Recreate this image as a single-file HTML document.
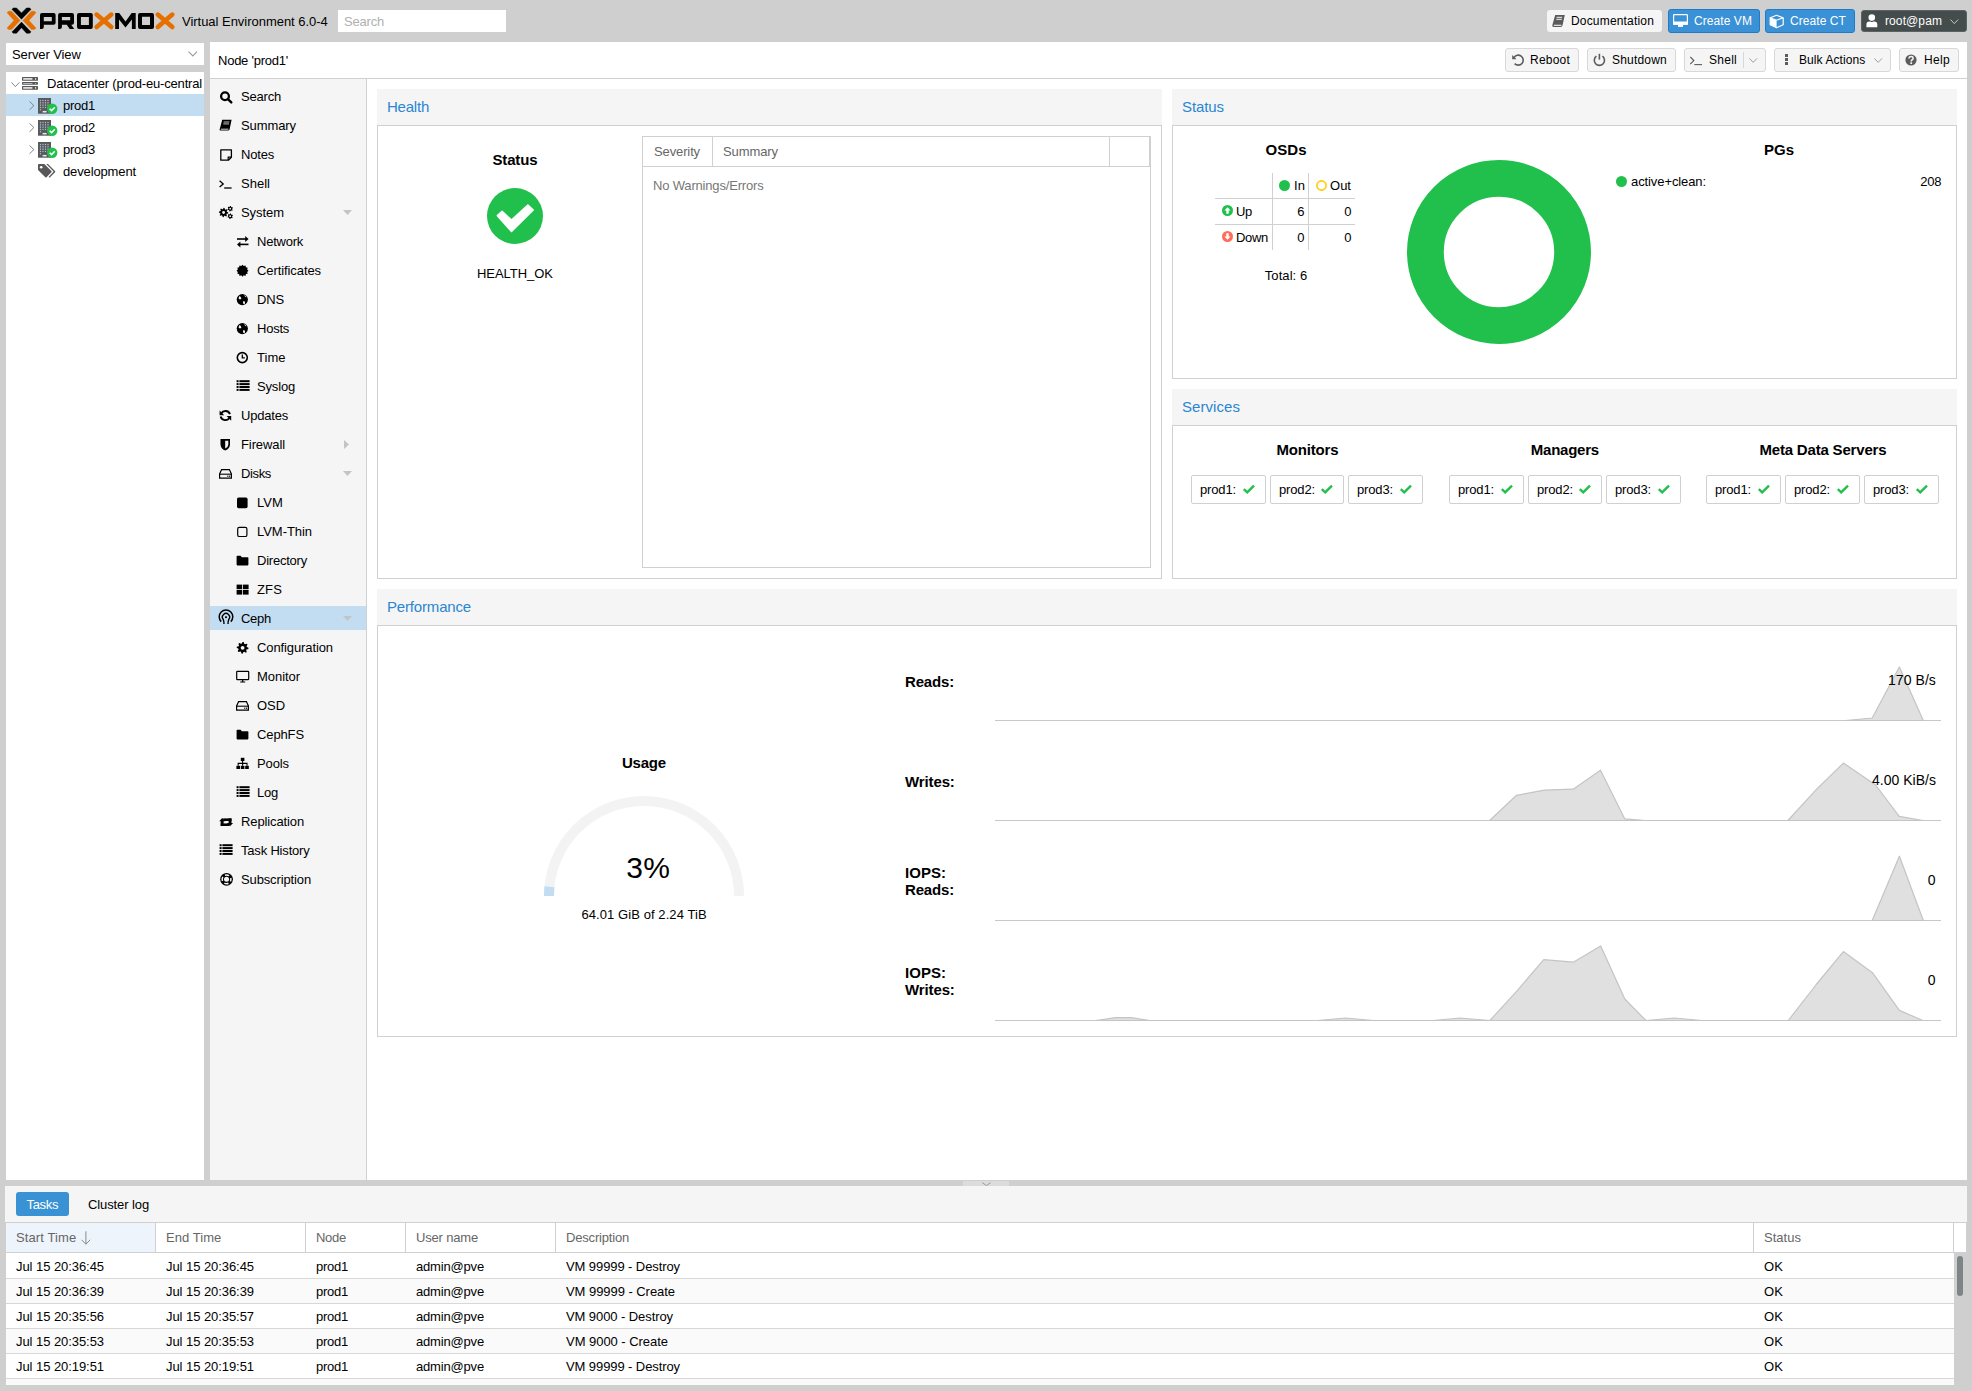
<!DOCTYPE html>
<html><head><meta charset="utf-8">
<style>
*{box-sizing:border-box}
html,body{margin:0;padding:0}
body{width:1972px;height:1391px;overflow:hidden;position:relative;background:#cfcfcf;font-family:"Liberation Sans",sans-serif;font-size:13px;color:#000}
.a{position:absolute}
.t{position:absolute;white-space:nowrap;line-height:16px}
.b{font-weight:bold}
svg{position:absolute;overflow:visible}
</style></head>
<body>
<svg style="left:0;top:0" width="180" height="42" viewBox="0 0 180 42">
<g fill="#000" stroke="#000" stroke-width="0.4" stroke-linejoin="round">
<polygon points="11.9,9.3 13.4,7.9 16.5,7.9 21.5,12.9 26.5,7.9 29.6,7.9 31.1,9.3 21.5,19.3"/>
<polygon points="21.5,22.1 31.1,32 29.6,33.3 26.5,33.3 21.5,27.7 16.5,33.3 13.4,33.3 11.9,32"/>
</g>
<g fill="#e57000" stroke="#e57000" stroke-width="0.4" stroke-linejoin="round">
<polygon points="7,12.7 8.5,11.3 11.6,11.3 20.1,20.4 11.6,29.5 8.5,29.5 7,28.1 14,20.4"/>
<polygon points="36,12.7 34.5,11.3 31.4,11.3 22.9,20.4 31.4,29.5 34.5,29.5 36,28.1 29,20.4"/>
</g>
<g fill="#000" fill-rule="evenodd">
<path d="M40,28.9 L40,14.9 Q40,12.9 42,12.9 L53.6,12.9 Q55.6,12.9 55.6,14.9 L55.6,22.8 Q55.6,24.8 53.6,24.8 L43.8,24.8 L43.8,26.9 Q43.8,28.9 41.8,28.9 Z M43.8,17.1 L51.8,17.1 L51.8,21.2 L43.8,21.2 Z"/>
<path d="M58.1,28.9 L58.1,14.9 Q58.1,12.9 60.1,12.9 L72,12.9 Q74,12.9 74,14.9 L74,22.8 Q74,24.8 72,24.8 L71.2,24.8 L74.3,28.9 L69.7,28.9 L66.8,24.8 L61.9,24.8 L61.9,26.9 Q61.9,28.9 59.9,28.9 Z M61.9,17.1 L70.2,17.1 L70.2,20.2 L61.9,20.2 Z"/>
<path d="M79,12.9 L90.8,12.9 Q92.8,12.9 92.8,14.9 L92.8,26.9 Q92.8,28.9 90.8,28.9 L79,28.9 Q77,28.9 77,26.9 L77,14.9 Q77,12.9 79,12.9 Z M80.9,17 L88.9,17 L88.9,24.9 L80.9,24.9 Z"/>
<path d="M115.2,28.9 L115.2,12.9 L119.2,12.9 L125.5,21.5 L131.7,12.9 L135.7,12.9 L135.7,28.9 L131.9,28.9 L131.9,19.5 L125.5,27.5 L119,19.5 L119,28.9 Z"/>
<path d="M140,12.9 L152,12.9 Q154,12.9 154,14.9 L154,26.9 Q154,28.9 152,28.9 L140,28.9 Q138,28.9 138,26.9 L138,14.9 Q138,12.9 140,12.9 Z M142,16.8 L150,16.8 L150,25 L142,25 Z"/>
</g>
<g fill="none" stroke="#e57000" stroke-width="4.6" stroke-linecap="round">
<path d="M96.6,14.6 L111.3,27.1 M111.3,14.6 L96.6,27.1"/>
<path d="M157.8,14.6 L172.3,27.1 M172.3,14.6 L157.8,27.1"/>
</g>
</svg>
<div class="t" style="left:182px;top:11.50px;font-size:13px;line-height:20px;color:#000;letter-spacing:-0.027px;">Virtual Environment 6.0-4</div>
<div class="a" style="left:338px;top:10px;width:168px;height:22px;background:#fff;"></div>
<div class="t" style="left:344px;top:11.50px;font-size:13px;line-height:20px;color:#b0b0b0;letter-spacing:-0.198px;">Search</div>
<div class="a" style="left:1547px;top:10px;width:115px;height:22px;background:#f5f5f5;border-radius:3px;"></div>
<svg style="left:1552px;top:15px" width="14" height="12" viewBox="0 0 14 12"><path d="M3.2,0 L12.8,0 L10.6,10 Q10.3,11.9 8.6,11.9 L1.6,11.9 Q0,11.9 0.3,10.2 Z" fill="#5a5a5a"/><path d="M1.8,10.3 L9.4,10.3" stroke="#f5f5f5" stroke-width="1.1"/><path d="M4.6,2.3 L10.2,2.3 M4.3,4.3 L9.8,4.3" stroke="#f5f5f5" stroke-width="1"/></svg>
<div class="t" style="left:1571px;top:10.84px;font-size:12px;line-height:20px;color:#000;letter-spacing:0.176px;">Documentation</div>
<div class="a" style="left:1668px;top:9px;width:92px;height:24px;background:#3a91d6;border:1px solid #1d7cc9;border-radius:3px;"></div>
<svg style="left:1673px;top:14px" width="15" height="13" viewBox="0 0 15 13"><rect x="0.6" y="0.6" width="13.8" height="9.6" rx="0.8" fill="none" stroke="#fff" stroke-width="1.2"/><rect x="0" y="7.5" width="15" height="3.2" fill="#fff"/><rect x="5" y="10.5" width="5" height="2.4" fill="#fff"/></svg>
<div class="t" style="left:1694px;top:10.84px;font-size:12px;line-height:20px;color:#fff;letter-spacing:0.072px;">Create VM</div>
<div class="a" style="left:1765px;top:9px;width:90px;height:24px;background:#3a91d6;border:1px solid #1d7cc9;border-radius:3px;"></div>
<svg style="left:1770px;top:15px" width="14" height="13" viewBox="0 0 14 13"><path d="M6.6,0.3 L13.2,2.7 L13.2,9.8 L6.6,12.7 L0.2,9.8 L0.2,2.7 Z" fill="none" stroke="#fff" stroke-width="1.2" stroke-linejoin="round"/><path d="M0.2,2.7 L6.6,5.2 L13.2,2.7" fill="none" stroke="#fff" stroke-width="1.2"/><path d="M0.2,3 L6.6,5.4 L6.6,12.6 L0.2,9.8 Z" fill="#fff"/></svg>
<div class="t" style="left:1790px;top:10.84px;font-size:12px;line-height:20px;color:#fff;letter-spacing:0.072px;">Create CT</div>
<div class="a" style="left:1861px;top:10px;width:106px;height:22px;background:#454c4c;border:1px solid #5a6363;border-radius:3px;"></div>
<svg style="left:1866px;top:14px" width="12" height="14" viewBox="0 0 12 14"><circle cx="5.8" cy="3.6" r="3.3" fill="#fff"/><path d="M0.4,13.3 L0.4,10.6 Q0.4,7.6 3.4,7.6 L4.4,7.6 Q5.8,8.6 7.2,7.6 L8.2,7.6 Q11.3,7.6 11.3,10.6 L11.3,13.3 Z" fill="#fff"/></svg>
<div class="t" style="left:1885px;top:10.84px;font-size:12px;line-height:20px;color:#fff;letter-spacing:0.100px;">root@pam</div>
<svg style="left:1950px;top:19px" width="9" height="6" viewBox="0 0 9 6"><path d="M0.5,0.6 L4.3,4.6 L8.1,0.6" fill="none" stroke="#ccc" stroke-width="1"/></svg>
<div class="a" style="left:6px;top:43px;width:198px;height:22px;background:#fff;"></div>
<div class="t" style="left:12px;top:44.50px;font-size:13px;line-height:20px;color:#000;letter-spacing:-0.098px;">Server View</div>
<svg style="left:188px;top:51px" width="10" height="6" viewBox="0 0 10 6"><path d="M0.6,0.6 L4.8,4.9 L9,0.6" fill="none" stroke="#9a9a9a" stroke-width="1.1"/></svg>
<div class="a" style="left:6px;top:72px;width:198px;height:1108px;background:#fff;"></div>
<div class="a" style="left:6px;top:94px;width:198px;height:22px;background:#c2ddf2;"></div>
<svg style="left:11px;top:82px" width="9" height="6" viewBox="0 0 9 6"><path d="M0.4,0.4 L4.4,4.6 L8.4,0.4" fill="none" stroke="#777" stroke-width="0.9"/></svg>
<svg style="left:22px;top:77px" width="16" height="13" viewBox="0 0 16 13"><rect x="0" y="0" width="16" height="3.8" rx="0.6" fill="#575757"/><rect x="1.2" y="1" width="9.2" height="1.7999999999999998" fill="#dcdcdc"/><rect x="13" y="1" width="1.2" height="1.7999999999999998" fill="#bfe6c0"/><rect x="0" y="5" width="16" height="2.7" rx="0.6" fill="#575757"/><rect x="1.2" y="6" width="9.2" height="0.7000000000000002" fill="#dcdcdc"/><rect x="13" y="6" width="1.2" height="0.7000000000000002" fill="#bfe6c0"/><rect x="0" y="9" width="16" height="3.8" rx="0.6" fill="#575757"/><rect x="1.2" y="10" width="9.2" height="1.7999999999999998" fill="#dcdcdc"/><rect x="13" y="10" width="1.2" height="1.7999999999999998" fill="#bfe6c0"/></svg>
<div class="t" style="left:47px;top:73.50px;font-size:13px;line-height:20px;color:#000;letter-spacing:-0.174px;width:157px;overflow:hidden;">Datacenter (prod-eu-central</div>
<svg style="left:29px;top:101px" width="6" height="10" viewBox="0 0 6 10"><path d="M0.5,0.4 L4.9,4.6 L0.5,8.8" fill="none" stroke="#777" stroke-width="0.9"/></svg>
<svg style="left:38px;top:98px" width="21" height="16" viewBox="0 0 21 16"><rect x="0" y="0" width="13" height="15.7" fill="#585858"/><rect x="1.9" y="1.9" width="1.2" height="1.3" fill="#a9bfd6"/><rect x="4.4" y="1.9" width="1.2" height="1.3" fill="#a9bfd6"/><rect x="6.9" y="1.9" width="1.2" height="1.3" fill="#a9bfd6"/><rect x="9.4" y="1.9" width="1.2" height="1.3" fill="#a9bfd6"/><rect x="1.9" y="4.2" width="1.2" height="1.3" fill="#a9bfd6"/><rect x="4.4" y="4.2" width="1.2" height="1.3" fill="#a9bfd6"/><rect x="6.9" y="4.2" width="1.2" height="1.3" fill="#a9bfd6"/><rect x="9.4" y="4.2" width="1.2" height="1.3" fill="#a9bfd6"/><rect x="1.9" y="6.5" width="1.2" height="1.3" fill="#a9bfd6"/><rect x="4.4" y="6.5" width="1.2" height="1.3" fill="#a9bfd6"/><rect x="6.9" y="6.5" width="1.2" height="1.3" fill="#a9bfd6"/><rect x="9.4" y="6.5" width="1.2" height="1.3" fill="#a9bfd6"/><rect x="1.9" y="8.8" width="1.2" height="1.3" fill="#a9bfd6"/><rect x="4.4" y="8.8" width="1.2" height="1.3" fill="#a9bfd6"/><rect x="6.9" y="8.8" width="1.2" height="1.3" fill="#a9bfd6"/><rect x="9.4" y="8.8" width="1.2" height="1.3" fill="#a9bfd6"/><rect x="1.9" y="11.1" width="1.2" height="1.3" fill="#a9bfd6"/><rect x="4.6" y="12.9" width="4" height="1.6" fill="#dde8f3"/><circle cx="14.2" cy="10.7" r="5.2" fill="#21bf4b"/><path d="M11.7,10.8 L13.6,12.6 L16.8,9.2" fill="none" stroke="#fff" stroke-width="1.5"/></svg>
<div class="t" style="left:63px;top:95.50px;font-size:13px;line-height:20px;color:#000;letter-spacing:-0.250px;">prod1</div>
<svg style="left:29px;top:123px" width="6" height="10" viewBox="0 0 6 10"><path d="M0.5,0.4 L4.9,4.6 L0.5,8.8" fill="none" stroke="#777" stroke-width="0.9"/></svg>
<svg style="left:38px;top:120px" width="21" height="16" viewBox="0 0 21 16"><rect x="0" y="0" width="13" height="15.7" fill="#585858"/><rect x="1.9" y="1.9" width="1.2" height="1.3" fill="#a9bfd6"/><rect x="4.4" y="1.9" width="1.2" height="1.3" fill="#a9bfd6"/><rect x="6.9" y="1.9" width="1.2" height="1.3" fill="#a9bfd6"/><rect x="9.4" y="1.9" width="1.2" height="1.3" fill="#a9bfd6"/><rect x="1.9" y="4.2" width="1.2" height="1.3" fill="#a9bfd6"/><rect x="4.4" y="4.2" width="1.2" height="1.3" fill="#a9bfd6"/><rect x="6.9" y="4.2" width="1.2" height="1.3" fill="#a9bfd6"/><rect x="9.4" y="4.2" width="1.2" height="1.3" fill="#a9bfd6"/><rect x="1.9" y="6.5" width="1.2" height="1.3" fill="#a9bfd6"/><rect x="4.4" y="6.5" width="1.2" height="1.3" fill="#a9bfd6"/><rect x="6.9" y="6.5" width="1.2" height="1.3" fill="#a9bfd6"/><rect x="9.4" y="6.5" width="1.2" height="1.3" fill="#a9bfd6"/><rect x="1.9" y="8.8" width="1.2" height="1.3" fill="#a9bfd6"/><rect x="4.4" y="8.8" width="1.2" height="1.3" fill="#a9bfd6"/><rect x="6.9" y="8.8" width="1.2" height="1.3" fill="#a9bfd6"/><rect x="9.4" y="8.8" width="1.2" height="1.3" fill="#a9bfd6"/><rect x="1.9" y="11.1" width="1.2" height="1.3" fill="#a9bfd6"/><rect x="4.6" y="12.9" width="4" height="1.6" fill="#dde8f3"/><circle cx="14.2" cy="10.7" r="5.2" fill="#21bf4b"/><path d="M11.7,10.8 L13.6,12.6 L16.8,9.2" fill="none" stroke="#fff" stroke-width="1.5"/></svg>
<div class="t" style="left:63px;top:117.50px;font-size:13px;line-height:20px;color:#000;letter-spacing:-0.250px;">prod2</div>
<svg style="left:29px;top:145px" width="6" height="10" viewBox="0 0 6 10"><path d="M0.5,0.4 L4.9,4.6 L0.5,8.8" fill="none" stroke="#777" stroke-width="0.9"/></svg>
<svg style="left:38px;top:142px" width="21" height="16" viewBox="0 0 21 16"><rect x="0" y="0" width="13" height="15.7" fill="#585858"/><rect x="1.9" y="1.9" width="1.2" height="1.3" fill="#a9bfd6"/><rect x="4.4" y="1.9" width="1.2" height="1.3" fill="#a9bfd6"/><rect x="6.9" y="1.9" width="1.2" height="1.3" fill="#a9bfd6"/><rect x="9.4" y="1.9" width="1.2" height="1.3" fill="#a9bfd6"/><rect x="1.9" y="4.2" width="1.2" height="1.3" fill="#a9bfd6"/><rect x="4.4" y="4.2" width="1.2" height="1.3" fill="#a9bfd6"/><rect x="6.9" y="4.2" width="1.2" height="1.3" fill="#a9bfd6"/><rect x="9.4" y="4.2" width="1.2" height="1.3" fill="#a9bfd6"/><rect x="1.9" y="6.5" width="1.2" height="1.3" fill="#a9bfd6"/><rect x="4.4" y="6.5" width="1.2" height="1.3" fill="#a9bfd6"/><rect x="6.9" y="6.5" width="1.2" height="1.3" fill="#a9bfd6"/><rect x="9.4" y="6.5" width="1.2" height="1.3" fill="#a9bfd6"/><rect x="1.9" y="8.8" width="1.2" height="1.3" fill="#a9bfd6"/><rect x="4.4" y="8.8" width="1.2" height="1.3" fill="#a9bfd6"/><rect x="6.9" y="8.8" width="1.2" height="1.3" fill="#a9bfd6"/><rect x="9.4" y="8.8" width="1.2" height="1.3" fill="#a9bfd6"/><rect x="1.9" y="11.1" width="1.2" height="1.3" fill="#a9bfd6"/><rect x="4.6" y="12.9" width="4" height="1.6" fill="#dde8f3"/><circle cx="14.2" cy="10.7" r="5.2" fill="#21bf4b"/><path d="M11.7,10.8 L13.6,12.6 L16.8,9.2" fill="none" stroke="#fff" stroke-width="1.5"/></svg>
<div class="t" style="left:63px;top:139.50px;font-size:13px;line-height:20px;color:#000;letter-spacing:-0.250px;">prod3</div>
<svg style="left:38px;top:164px" width="18" height="15" viewBox="0 0 18 15"><path d="M0,0.8 Q0,0 0.8,0 L6.3,0 L13.4,7.1 Q14,7.7 13.4,8.3 L8.5,13.2 Q7.9,13.8 7.3,13.2 L0,6 Z" fill="#585858"/><circle cx="3.2" cy="3.2" r="1.3" fill="#fff"/><path d="M8.2,0 L10,0 L17,7.1 Q17.6,7.7 17,8.3 L12.1,13.2 Q11.5,13.8 10.9,13.2 L10.6,12.9 L15.3,8.1 Q15.7,7.7 15.3,7.3 Z" fill="#585858"/></svg>
<div class="t" style="left:63px;top:161.50px;font-size:13px;line-height:20px;color:#000;letter-spacing:-0.131px;">development</div>
<div class="a" style="left:210px;top:42px;width:1757px;height:1138px;background:#fff;"></div>
<div class="a" style="left:210px;top:78px;width:1757px;height:1px;background:#d0d0d0;"></div>
<div class="t" style="left:218px;top:50.50px;font-size:13px;line-height:20px;color:#000;letter-spacing:-0.242px;">Node 'prod1'</div>
<div class="a" style="left:1505px;top:48px;width:74px;height:24px;background:#f5f5f5;border:1px solid #d8d8d8;border-radius:3px;"></div>
<div class="t" style="left:1530px;top:49.84px;font-size:12px;line-height:20px;color:#000;letter-spacing:0.217px;">Reboot</div>
<svg style="left:1512px;top:54px" width="12" height="12" viewBox="0 0 12 12"><path d="M1.9,3.6 A5,5 0 1 1 2.6,9.6" fill="none" stroke="#5c5c5c" stroke-width="1.6"/><path d="M0.2,0.9 L0.2,5.2 L4.5,5.2 Z" fill="#5c5c5c"/></svg>
<div class="a" style="left:1587px;top:48px;width:89px;height:24px;background:#f5f5f5;border:1px solid #d8d8d8;border-radius:3px;"></div>
<div class="t" style="left:1612px;top:49.84px;font-size:12px;line-height:20px;color:#000;letter-spacing:0.203px;">Shutdown</div>
<svg style="left:1593px;top:53px" width="13" height="13" viewBox="0 0 13 13"><path d="M3.4,3.2 A5.1,5.1 0 1 0 9.4,3.2" fill="none" stroke="#5c5c5c" stroke-width="1.6"/><path d="M6.4,0.8 L6.4,6.6" stroke="#5c5c5c" stroke-width="1.6"/></svg>
<div class="a" style="left:1684px;top:48px;width:82px;height:24px;background:#f5f5f5;border:1px solid #d8d8d8;border-radius:3px;"></div>
<div class="t" style="left:1709px;top:49.84px;font-size:12px;line-height:20px;color:#000;letter-spacing:0.263px;">Shell</div>
<svg style="left:1690px;top:56px" width="13" height="10" viewBox="0 0 13 10"><path d="M0.3,0.9 L3.8,4.6 L0.3,8.2" fill="none" stroke="#5c5c5c" stroke-width="1.2"/><path d="M4.3,8.6 L12,8.6" stroke="#5c5c5c" stroke-width="1.1"/></svg>
<div class="a" style="left:1743px;top:52px;width:1px;height:16px;background:#d8d8d8;"></div>
<svg style="left:1749px;top:58px" width="9" height="6" viewBox="0 0 9 6"><path d="M0.4,0.4 L4.2,4.4 L8,0.4" fill="none" stroke="#a0a0a0" stroke-width="1"/></svg>
<div class="a" style="left:1774px;top:48px;width:117px;height:24px;background:#f5f5f5;border:1px solid #d8d8d8;border-radius:3px;"></div>
<div class="t" style="left:1799px;top:49.84px;font-size:12px;line-height:20px;color:#000;letter-spacing:0.081px;">Bulk Actions</div>
<div class="a" style="left:1785px;top:54px;width:3px;height:3px;background:#5c5c5c;"></div>
<div class="a" style="left:1785px;top:58px;width:3px;height:3px;background:#5c5c5c;"></div>
<div class="a" style="left:1785px;top:62px;width:3px;height:3px;background:#5c5c5c;"></div>
<svg style="left:1874px;top:58px" width="9" height="6" viewBox="0 0 9 6"><path d="M0.4,0.4 L4.2,4.4 L8,0.4" fill="none" stroke="#a0a0a0" stroke-width="1"/></svg>
<div class="a" style="left:1899px;top:48px;width:60px;height:24px;background:#f5f5f5;border:1px solid #d8d8d8;border-radius:3px;"></div>
<div class="t" style="left:1924px;top:49.84px;font-size:12px;line-height:20px;color:#000;letter-spacing:0.330px;">Help</div>
<svg style="left:1905px;top:54px" width="12" height="12" viewBox="0 0 12 12"><circle cx="6" cy="6" r="5.6" fill="#5c5c5c"/><path d="M4,4.6 Q4,2.6 6.1,2.6 Q8.1,2.6 8.1,4.3 Q8.1,5.4 6.9,6 Q6.2,6.4 6.2,7.4" fill="none" stroke="#f5f5f5" stroke-width="1.5"/><rect x="5.3" y="8.3" width="1.8" height="1.7" fill="#f5f5f5"/></svg>
<div class="a" style="left:210px;top:79px;width:157px;height:1101px;background:#f5f5f5;border-right:1px solid #d0d0d0;"></div>
<svg style="left:219px;top:90px" width="14" height="14" viewBox="0 0 14 14"><circle cx="6" cy="6.2" r="3.9" fill="none" stroke="#000" stroke-width="2.3"/><path d="M8.9,9.1 L12.3,12.4" stroke="#000" stroke-width="2.4" stroke-linecap="round"/></svg>
<div class="t" style="left:241px;top:86.50px;font-size:13px;line-height:20px;color:#000;letter-spacing:-0.198px;">Search</div>
<svg style="left:219px;top:119px" width="14" height="14" viewBox="0 0 14 14"><path d="M3.2,0.8 L12.6,0.8 L10.6,10.2 Q10.3,11.6 8.9,11.6 L1.6,11.6 Q0.4,11.6 0.7,10.3 Z" fill="#000"/><path d="M1.8,10.2 L9.4,10.2" stroke="#f5f5f5" stroke-width="0.9"/><path d="M4.6,3 L10.4,3 M4.3,4.9 L10,4.9" stroke="#f5f5f5" stroke-width="0.8"/></svg>
<div class="t" style="left:241px;top:115.50px;font-size:13px;line-height:20px;color:#000;letter-spacing:-0.088px;">Summary</div>
<svg style="left:219px;top:148px" width="14" height="14" viewBox="0 0 14 14"><path d="M1.8,1.8 L12.4,1.8 L12.4,9.2 L9.4,12.2 L1.8,12.2 Z" fill="none" stroke="#000" stroke-width="1.3" stroke-linejoin="round"/><path d="M9.2,12 L9.2,9.2 L12.2,9.2" fill="none" stroke="#000" stroke-width="1.2"/></svg>
<div class="t" style="left:241px;top:144.50px;font-size:13px;line-height:20px;color:#000;letter-spacing:-0.192px;">Notes</div>
<svg style="left:219px;top:177px" width="14" height="14" viewBox="0 0 14 14"><path d="M0.6,3.8 L4.2,6.9 L0.6,10" fill="none" stroke="#000" stroke-width="1.3"/><path d="M5.2,11 L12.6,11" stroke="#000" stroke-width="1.3"/></svg>
<div class="t" style="left:241px;top:173.50px;font-size:13px;line-height:20px;color:#000;letter-spacing:0.019px;">Shell</div>
<svg style="left:219px;top:206px" width="14" height="14" viewBox="0 0 14 14"><polygon points="4.60,1.80 5.52,1.89 5.90,3.36 6.49,3.67 7.92,3.18 8.51,3.89 7.74,5.20 7.93,5.84 9.30,6.50 9.21,7.42 7.74,7.80 7.43,8.39 7.92,9.82 7.21,10.41 5.90,9.64 5.26,9.83 4.60,11.20 3.68,11.11 3.30,9.64 2.71,9.33 1.28,9.82 0.69,9.11 1.46,7.80 1.27,7.16 -0.10,6.50 -0.01,5.58 1.46,5.20 1.77,4.61 1.28,3.18 1.99,2.59 3.30,3.36 3.94,3.17" fill="#000"/><circle cx="4.6" cy="6.5" r="1.4" fill="#f5f5f5"/><polygon points="11.20,-0.10 11.92,-0.00 12.20,0.97 12.61,1.29 13.62,1.30 13.90,1.98 13.20,2.70 13.13,3.22 13.62,4.10 13.18,4.68 12.20,4.43 11.72,4.63 11.20,5.50 10.48,5.40 10.20,4.43 9.79,4.11 8.78,4.10 8.50,3.42 9.20,2.70 9.27,2.18 8.78,1.30 9.22,0.72 10.20,0.97 10.68,0.77" fill="#000"/><circle cx="11.2" cy="2.7" r="0.9" fill="#f5f5f5"/><polygon points="11.20,7.40 11.92,7.50 12.20,8.47 12.61,8.79 13.62,8.80 13.90,9.48 13.20,10.20 13.13,10.72 13.62,11.60 13.18,12.18 12.20,11.93 11.72,12.13 11.20,13.00 10.48,12.90 10.20,11.93 9.79,11.61 8.78,11.60 8.50,10.92 9.20,10.20 9.27,9.68 8.78,8.80 9.22,8.22 10.20,8.47 10.68,8.27" fill="#000"/><circle cx="11.2" cy="10.2" r="0.9" fill="#f5f5f5"/></svg>
<div class="t" style="left:241px;top:202.50px;font-size:13px;line-height:20px;color:#000;letter-spacing:-0.057px;">System</div>
<svg style="left:343px;top:210px" width="9" height="5" viewBox="0 0 9 5"><path d="M0,0 L9,0 L4.5,5 Z" fill="#c4c4c4"/></svg>
<svg style="left:236px;top:235px" width="14" height="14" viewBox="0 0 14 14"><path d="M1,4 L10.5,4" stroke="#000" stroke-width="1.6"/><path d="M9.2,1 L12.6,4 L9.2,7 Z" fill="#000"/><path d="M3,9.4 L12.5,9.4" stroke="#000" stroke-width="1.6"/><path d="M4.4,6.4 L1,9.4 L4.4,12.4 Z" fill="#000"/></svg>
<div class="t" style="left:257px;top:231.50px;font-size:13px;line-height:20px;color:#000;letter-spacing:-0.240px;">Network</div>
<svg style="left:236px;top:264px" width="14" height="14" viewBox="0 0 14 14"><polygon points="12.50,6.70 11.14,7.94 11.70,9.70 9.89,10.09 9.50,11.90 7.74,11.34 6.50,12.70 5.26,11.34 3.50,11.90 3.11,10.09 1.30,9.70 1.86,7.94 0.50,6.70 1.86,5.46 1.30,3.70 3.11,3.31 3.50,1.50 5.26,2.06 6.50,0.70 7.74,2.06 9.50,1.50 9.89,3.31 11.70,3.70 11.14,5.46" fill="#000"/></svg>
<div class="t" style="left:257px;top:260.50px;font-size:13px;line-height:20px;color:#000;letter-spacing:-0.085px;">Certificates</div>
<svg style="left:236px;top:293px" width="14" height="14" viewBox="0 0 14 14"><circle cx="6.3" cy="6.6" r="5.6" fill="#000"/><path d="M3.2,3.2 Q5.6,3.6 5.2,6 Q3.6,6.8 2.6,5.4 Z M7.4,8 Q9.6,8.2 8.8,11 Q7.2,11.6 7,9.6 Z M8,2 Q10,2.6 10.4,4.4 Q9,4.4 8,2 Z" fill="#f5f5f5"/></svg>
<div class="t" style="left:257px;top:289.50px;font-size:13px;line-height:20px;color:#000;letter-spacing:-0.149px;">DNS</div>
<svg style="left:236px;top:322px" width="14" height="14" viewBox="0 0 14 14"><circle cx="6.3" cy="6.6" r="5.6" fill="#000"/><path d="M3.2,3.2 Q5.6,3.6 5.2,6 Q3.6,6.8 2.6,5.4 Z M7.4,8 Q9.6,8.2 8.8,11 Q7.2,11.6 7,9.6 Z M8,2 Q10,2.6 10.4,4.4 Q9,4.4 8,2 Z" fill="#f5f5f5"/></svg>
<div class="t" style="left:257px;top:318.50px;font-size:13px;line-height:20px;color:#000;letter-spacing:-0.246px;">Hosts</div>
<svg style="left:236px;top:351px" width="14" height="14" viewBox="0 0 14 14"><circle cx="6.3" cy="6.6" r="5" fill="none" stroke="#000" stroke-width="1.6"/><path d="M6.3,3.4 L6.3,6.8 L8.8,6.8" fill="none" stroke="#000" stroke-width="1.3"/></svg>
<div class="t" style="left:257px;top:347.50px;font-size:13px;line-height:20px;color:#000;letter-spacing:0.028px;">Time</div>
<svg style="left:236px;top:380px" width="14" height="14" viewBox="0 0 14 14"><rect x="0.6" y="0.2" width="2" height="2" fill="#000"/><rect x="3.4" y="0.2" width="10.2" height="2" fill="#000"/><rect x="0.6" y="3.1" width="2" height="2" fill="#000"/><rect x="3.4" y="3.1" width="10.2" height="2" fill="#000"/><rect x="0.6" y="6" width="2" height="2" fill="#000"/><rect x="3.4" y="6" width="10.2" height="2" fill="#000"/><rect x="0.6" y="8.9" width="2" height="2" fill="#000"/><rect x="3.4" y="8.9" width="10.2" height="2" fill="#000"/></svg>
<div class="t" style="left:257px;top:376.50px;font-size:13px;line-height:20px;color:#000;letter-spacing:-0.170px;">Syslog</div>
<svg style="left:219px;top:409px" width="14" height="14" viewBox="0 0 14 14"><path d="M11,5.2 A4.9,4.9 0 0 0 2.2,4.4" fill="none" stroke="#000" stroke-width="1.9"/><path d="M1.6,7.6 A4.9,4.9 0 0 0 10.6,8.6" fill="none" stroke="#000" stroke-width="1.9"/><path d="M0.6,1.4 L0.6,6.2 L5.2,6.2 Z M12.2,11.8 L12.2,7 L7.6,7 Z" fill="#000"/></svg>
<div class="t" style="left:241px;top:405.50px;font-size:13px;line-height:20px;color:#000;letter-spacing:-0.203px;">Updates</div>
<svg style="left:219px;top:438px" width="14" height="14" viewBox="0 0 14 14"><path d="M1.5,1 L11,1 L11,6.2 Q11,10.4 6.2,12.6 Q1.5,10.4 1.5,6.2 Z" fill="#000"/><path d="M6.2,2.8 L9.3,2.8 L9.3,6.3 Q9.3,9 6.2,10.6 Z" fill="#f5f5f5"/></svg>
<div class="t" style="left:241px;top:434.50px;font-size:13px;line-height:20px;color:#000;letter-spacing:-0.098px;">Firewall</div>
<svg style="left:344px;top:440px" width="5" height="9" viewBox="0 0 5 9"><path d="M0,0 L5,4.5 L0,9 Z" fill="#c4c4c4"/></svg>
<svg style="left:219px;top:467px" width="14" height="14" viewBox="0 0 14 14"><path d="M2.6,2.6 L10.4,2.6 L12.4,7 L12.4,11.2 L0.6,11.2 L0.6,7 Z" fill="none" stroke="#000" stroke-width="1.2"/><path d="M0.8,7.2 L12.2,7.2" stroke="#000" stroke-width="1.1"/><rect x="8.2" y="8.6" width="1.2" height="1.2" fill="#000"/><rect x="10" y="8.6" width="1.2" height="1.2" fill="#000"/></svg>
<div class="t" style="left:241px;top:463.50px;font-size:13px;line-height:20px;color:#000;letter-spacing:-0.355px;">Disks</div>
<svg style="left:343px;top:471px" width="9" height="5" viewBox="0 0 9 5"><path d="M0,0 L9,0 L4.5,5 Z" fill="#c4c4c4"/></svg>
<svg style="left:236px;top:496px" width="14" height="14" viewBox="0 0 14 14"><rect x="1" y="1.6" width="10.6" height="10.6" rx="1.6" fill="#000"/></svg>
<div class="t" style="left:257px;top:492.50px;font-size:13px;line-height:20px;color:#000;letter-spacing:0.090px;">LVM</div>
<svg style="left:236px;top:525px" width="14" height="14" viewBox="0 0 14 14"><rect x="1.7" y="2.3" width="9.2" height="9.2" rx="1.6" fill="none" stroke="#000" stroke-width="1.2"/></svg>
<div class="t" style="left:257px;top:521.50px;font-size:13px;line-height:20px;color:#000;letter-spacing:-0.044px;">LVM-Thin</div>
<svg style="left:236px;top:554px" width="14" height="14" viewBox="0 0 14 14"><path d="M0.6,2.6 Q0.6,1.8 1.4,1.8 L4.6,1.8 L5.8,3.2 L11.6,3.2 Q12.4,3.2 12.4,4 L12.4,10.6 Q12.4,11.4 11.6,11.4 L1.4,11.4 Q0.6,11.4 0.6,10.6 Z" fill="#000"/></svg>
<div class="t" style="left:257px;top:550.50px;font-size:13px;line-height:20px;color:#000;letter-spacing:-0.223px;">Directory</div>
<svg style="left:236px;top:583px" width="14" height="14" viewBox="0 0 14 14"><rect x="0.6" y="1.6" width="5.6" height="4.6" fill="#000"/><rect x="7" y="1.6" width="5.6" height="4.6" fill="#000"/><rect x="0.6" y="7" width="5.6" height="4.6" fill="#000"/><rect x="7" y="7" width="5.6" height="4.6" fill="#000"/></svg>
<div class="t" style="left:257px;top:579.50px;font-size:13px;line-height:20px;color:#000;letter-spacing:0.149px;">ZFS</div>
<div class="a" style="left:210px;top:606px;width:156px;height:24px;background:#c2ddf2;"></div>
<svg style="left:219px;top:612px" width="14" height="14" viewBox="0 0 14 14"><path d="M2.2,9.6 A6.8,6.8 0 1 1 11.8,9.6" fill="none" stroke="#000" stroke-width="1.5"/><path d="M5,11.9 Q5,9.4 4.2,7.3 A3.6,3.6 0 1 1 9.8,7.3 Q9,9.4 9,11.9" fill="none" stroke="#000" stroke-width="1.4"/><rect x="6.1" y="4.3" width="1.8" height="1.8" fill="#000"/></svg>
<div class="t" style="left:241px;top:608.50px;font-size:13px;line-height:20px;color:#000;letter-spacing:-0.270px;">Ceph</div>
<svg style="left:343px;top:616px" width="9" height="5" viewBox="0 0 9 5"><path d="M0,0 L9,0 L4.5,5 Z" fill="#c4c4c4"/></svg>
<svg style="left:236px;top:641px" width="14" height="14" viewBox="0 0 14 14"><polygon points="6.60,0.90 7.75,1.01 8.25,2.83 8.99,3.22 10.77,2.63 11.51,3.52 10.57,5.15 10.82,5.96 12.50,6.80 12.39,7.95 10.57,8.45 10.18,9.19 10.77,10.97 9.88,11.71 8.25,10.77 7.44,11.02 6.60,12.70 5.45,12.59 4.95,10.77 4.21,10.38 2.43,10.97 1.69,10.08 2.63,8.45 2.38,7.64 0.70,6.80 0.81,5.65 2.63,5.15 3.02,4.41 2.43,2.63 3.32,1.89 4.95,2.83 5.76,2.58" fill="#000"/><circle cx="6.6" cy="6.8" r="1.9" fill="#f5f5f5"/></svg>
<div class="t" style="left:257px;top:637.50px;font-size:13px;line-height:20px;color:#000;letter-spacing:-0.102px;">Configuration</div>
<svg style="left:236px;top:670px" width="14" height="14" viewBox="0 0 14 14"><rect x="0.7" y="1.3" width="12" height="8.4" rx="0.8" fill="none" stroke="#000" stroke-width="1.2"/><path d="M4.2,12 L9.2,12 M6.7,9.8 L6.7,12" stroke="#000" stroke-width="1.2"/></svg>
<div class="t" style="left:257px;top:666.50px;font-size:13px;line-height:20px;color:#000;letter-spacing:-0.050px;">Monitor</div>
<svg style="left:236px;top:699px" width="14" height="14" viewBox="0 0 14 14"><path d="M2.6,2.6 L10.4,2.6 L12.4,7 L12.4,11.2 L0.6,11.2 L0.6,7 Z" fill="none" stroke="#000" stroke-width="1.2"/><path d="M0.8,7.2 L12.2,7.2" stroke="#000" stroke-width="1.1"/><rect x="8.2" y="8.6" width="1.2" height="1.2" fill="#000"/><rect x="10" y="8.6" width="1.2" height="1.2" fill="#000"/></svg>
<div class="t" style="left:257px;top:695.50px;font-size:13px;line-height:20px;color:#000;letter-spacing:-0.057px;">OSD</div>
<svg style="left:236px;top:728px" width="14" height="14" viewBox="0 0 14 14"><path d="M0.6,2.6 Q0.6,1.8 1.4,1.8 L4.6,1.8 L5.8,3.2 L11.6,3.2 Q12.4,3.2 12.4,4 L12.4,10.6 Q12.4,11.4 11.6,11.4 L1.4,11.4 Q0.6,11.4 0.6,10.6 Z" fill="#000"/></svg>
<div class="t" style="left:257px;top:724.50px;font-size:13px;line-height:20px;color:#000;letter-spacing:-0.115px;">CephFS</div>
<svg style="left:236px;top:757px" width="14" height="14" viewBox="0 0 14 14"><rect x="4.8" y="0.8" width="3.6" height="3.2" fill="#000"/><rect x="0.4" y="8.8" width="3.6" height="3.2" fill="#000"/><rect x="4.8" y="8.8" width="3.6" height="3.2" fill="#000"/><rect x="9.2" y="8.8" width="3.6" height="3.2" fill="#000"/><path d="M6.6,4 L6.6,8.8 M2.2,8.8 L2.2,6.4 L11,6.4 L11,8.8" fill="none" stroke="#000" stroke-width="1.1"/></svg>
<div class="t" style="left:257px;top:753.50px;font-size:13px;line-height:20px;color:#000;letter-spacing:-0.104px;">Pools</div>
<svg style="left:236px;top:786px" width="14" height="14" viewBox="0 0 14 14"><rect x="0.6" y="0.2" width="2" height="2" fill="#000"/><rect x="3.4" y="0.2" width="10.2" height="2" fill="#000"/><rect x="0.6" y="3.1" width="2" height="2" fill="#000"/><rect x="3.4" y="3.1" width="10.2" height="2" fill="#000"/><rect x="0.6" y="6" width="2" height="2" fill="#000"/><rect x="3.4" y="6" width="10.2" height="2" fill="#000"/><rect x="0.6" y="8.9" width="2" height="2" fill="#000"/><rect x="3.4" y="8.9" width="10.2" height="2" fill="#000"/></svg>
<div class="t" style="left:257px;top:782.50px;font-size:13px;line-height:20px;color:#000;letter-spacing:-0.230px;">Log</div>
<svg style="left:219px;top:815px" width="14" height="14" viewBox="0 0 14 14"><polygon points="0.2,6.2 3.2,2.9 6.3,6.2" fill="#000"/><rect x="1.7" y="5.6" width="2.9" height="5.4" fill="#000"/><rect x="1.7" y="8.4" width="8.4" height="2.6" fill="#000"/><rect x="4.2" y="3.4" width="8.3" height="2.6" fill="#000"/><rect x="9.6" y="3.4" width="2.9" height="5.2" fill="#000"/><polygon points="7.9,8 14.1,8 11,11.2" fill="#000"/></svg>
<div class="t" style="left:241px;top:811.50px;font-size:13px;line-height:20px;color:#000;letter-spacing:-0.119px;">Replication</div>
<svg style="left:219px;top:844px" width="14" height="14" viewBox="0 0 14 14"><rect x="0.6" y="0.2" width="2" height="2" fill="#000"/><rect x="3.4" y="0.2" width="10.2" height="2" fill="#000"/><rect x="0.6" y="3.1" width="2" height="2" fill="#000"/><rect x="3.4" y="3.1" width="10.2" height="2" fill="#000"/><rect x="0.6" y="6" width="2" height="2" fill="#000"/><rect x="3.4" y="6" width="10.2" height="2" fill="#000"/><rect x="0.6" y="8.9" width="2" height="2" fill="#000"/><rect x="3.4" y="8.9" width="10.2" height="2" fill="#000"/></svg>
<div class="t" style="left:241px;top:840.50px;font-size:13px;line-height:20px;color:#000;letter-spacing:-0.186px;">Task History</div>
<svg style="left:219px;top:873px" width="14" height="14" viewBox="0 0 14 14"><circle cx="7.55" cy="6.3" r="6.35" fill="#000"/><circle cx="7.55" cy="6.3" r="4.35" fill="none" stroke="#f5f5f5" stroke-width="1.5" stroke-dasharray="4.3 2.53" stroke-dashoffset="2.15"/><circle cx="7.55" cy="6.3" r="2.5" fill="#f5f5f5"/></svg>
<div class="t" style="left:241px;top:869.50px;font-size:13px;line-height:20px;color:#000;letter-spacing:-0.128px;">Subscription</div>
<div class="a" style="left:377px;top:89px;width:785px;height:36px;background:#f5f5f5;"></div>
<div class="a" style="left:377px;top:125px;width:785px;height:1px;background:#d0d0d0;"></div>
<div class="t" style="left:387px;top:96.80px;font-size:15px;line-height:20px;color:#2a86d2;letter-spacing:-0.227px;">Health</div>
<div class="a" style="left:377px;top:126px;width:785px;height:453px;background:#fff;border:1px solid #d0d0d0;border-top:none;"></div>
<div class="a" style="left:1172px;top:89px;width:785px;height:36px;background:#f5f5f5;"></div>
<div class="a" style="left:1172px;top:125px;width:785px;height:1px;background:#d0d0d0;"></div>
<div class="t" style="left:1182px;top:96.80px;font-size:15px;line-height:20px;color:#2a86d2;letter-spacing:-0.087px;">Status</div>
<div class="a" style="left:1172px;top:126px;width:785px;height:253px;background:#fff;border:1px solid #d0d0d0;border-top:none;"></div>
<div class="a" style="left:1172px;top:389px;width:785px;height:36px;background:#f5f5f5;"></div>
<div class="a" style="left:1172px;top:425px;width:785px;height:1px;background:#d0d0d0;"></div>
<div class="t" style="left:1182px;top:396.80px;font-size:15px;line-height:20px;color:#2a86d2;letter-spacing:0.060px;">Services</div>
<div class="a" style="left:1172px;top:426px;width:785px;height:153px;background:#fff;border:1px solid #d0d0d0;border-top:none;"></div>
<div class="a" style="left:377px;top:589px;width:1580px;height:36px;background:#f5f5f5;"></div>
<div class="a" style="left:377px;top:625px;width:1580px;height:1px;background:#d0d0d0;"></div>
<div class="t" style="left:387px;top:596.80px;font-size:15px;line-height:20px;color:#2a86d2;letter-spacing:-0.170px;">Performance</div>
<div class="a" style="left:377px;top:626px;width:1580px;height:411px;background:#fff;border:1px solid #d0d0d0;border-top:none;"></div>
<div class="t" style="left:314.93px;width:400px;text-align:center;top:149.80px;font-size:15px;line-height:20px;color:#000;font-weight:bold;letter-spacing:-0.140px;">Status</div>
<svg style="left:487px;top:188px" width="56" height="56" viewBox="0 0 56 56"><circle cx="28" cy="28" r="28" fill="#21bf4b"/><path d="M10.4,27.6 L15.1,23.4 L24.5,32.2 L40.9,17 L46.2,22 L24.5,43.4 Z" fill="#fff" stroke="#fff" stroke-width="1.6" stroke-linejoin="round"/></svg>
<div class="t" style="left:314.98px;width:400px;text-align:center;top:263.50px;font-size:13px;line-height:20px;color:#000;letter-spacing:-0.034px;">HEALTH_OK</div>
<div class="a" style="left:642px;top:136px;width:509px;height:432px;background:#fff;border:1px solid #d0d0d0;"></div>
<div class="a" style="left:643px;top:166px;width:507px;height:1px;background:#d0d0d0;"></div>
<div class="a" style="left:712px;top:137px;width:1px;height:29px;background:#d0d0d0;"></div>
<div class="a" style="left:1109px;top:137px;width:1px;height:29px;background:#d0d0d0;"></div>
<div class="a" style="left:1149px;top:137px;width:1px;height:29px;background:#d0d0d0;"></div>
<div class="t" style="left:654px;top:141.50px;font-size:13px;line-height:20px;color:#666;letter-spacing:-0.120px;">Severity</div>
<div class="t" style="left:723px;top:141.50px;font-size:13px;line-height:20px;color:#666;letter-spacing:-0.088px;">Summary</div>
<div class="t" style="left:653px;top:175.50px;font-size:13px;line-height:20px;color:#777;letter-spacing:-0.174px;">No Warnings/Errors</div>
<div class="t" style="left:1086.02px;width:400px;text-align:center;top:139.80px;font-size:15px;line-height:20px;color:#000;font-weight:bold;letter-spacing:0.038px;">OSDs</div>
<div class="a" style="left:1272px;top:173px;width:1px;height:77px;background:#d0d0d0;"></div>
<div class="a" style="left:1308px;top:173px;width:1px;height:77px;background:#d0d0d0;"></div>
<div class="a" style="left:1215px;top:198px;width:140px;height:1px;background:#d0d0d0;"></div>
<div class="a" style="left:1215px;top:224px;width:140px;height:1px;background:#d0d0d0;"></div>
<svg style="left:1279px;top:180px" width="11" height="11" viewBox="0 0 11 11"><circle cx="5.5" cy="5.5" r="5.5" fill="#21bf4b"/></svg>
<div class="t" style="left:1294px;top:175.50px;font-size:13px;line-height:20px;color:#000;letter-spacing:0.079px;">In</div>
<svg style="left:1316px;top:180px" width="11" height="11" viewBox="0 0 11 11"><circle cx="5.5" cy="5.5" r="4.6" fill="none" stroke="#ffcc00" stroke-width="1.6"/></svg>
<div class="t" style="left:1330px;top:175.50px;font-size:13px;line-height:20px;color:#000;letter-spacing:0.015px;">Out</div>
<svg style="left:1222px;top:205px" width="11" height="11" viewBox="0 0 11 11"><circle cx="5.5" cy="5.5" r="5.5" fill="#21bf4b"/><path d="M5.5,2.2 L8.6,5.4 L6.7,5.4 L6.7,8.8 L4.3,8.8 L4.3,5.4 L2.4,5.4 Z" fill="#fff"/></svg>
<div class="t" style="left:1236px;top:201.50px;font-size:13px;line-height:20px;color:#000;letter-spacing:-0.309px;">Up</div>
<svg style="left:1222px;top:231px" width="11" height="11" viewBox="0 0 11 11"><circle cx="5.5" cy="5.5" r="5.5" fill="#ff6c59"/><path d="M5.5,8.8 L8.6,5.6 L6.7,5.6 L6.7,2.2 L4.3,2.2 L4.3,5.6 L2.4,5.6 Z" fill="#fff"/></svg>
<div class="t" style="left:1236px;top:227.50px;font-size:13px;line-height:20px;color:#000;letter-spacing:-0.309px;">Down</div>
<div class="t" style="right:667.77px;top:201.50px;font-size:13px;line-height:20px;color:#000;letter-spacing:-0.230px;">6</div>
<div class="t" style="right:620.77px;top:201.50px;font-size:13px;line-height:20px;color:#000;letter-spacing:-0.230px;">0</div>
<div class="t" style="right:667.77px;top:227.50px;font-size:13px;line-height:20px;color:#000;letter-spacing:-0.230px;">0</div>
<div class="t" style="right:620.77px;top:227.50px;font-size:13px;line-height:20px;color:#000;letter-spacing:-0.230px;">0</div>
<div class="t" style="left:1086.04px;width:400px;text-align:center;top:265.50px;font-size:13px;line-height:20px;color:#000;letter-spacing:0.081px;">Total: 6</div>
<svg style="left:1407px;top:160px" width="184" height="184" viewBox="0 0 184 184"><circle cx="92" cy="92" r="73.6" fill="none" stroke="#21bf4b" stroke-width="36.8"/></svg>
<div class="t" style="left:1579.00px;width:400px;text-align:center;top:139.80px;font-size:15px;line-height:20px;color:#000;font-weight:bold;letter-spacing:-0.005px;">PGs</div>
<svg style="left:1616px;top:176px" width="11" height="11" viewBox="0 0 11 11"><circle cx="5.5" cy="5.5" r="5.5" fill="#21bf4b"/></svg>
<div class="t" style="left:1631px;top:171.50px;font-size:13px;line-height:20px;color:#000;letter-spacing:-0.096px;">active+clean:</div>
<div class="t" style="right:30.77px;top:171.50px;font-size:13px;line-height:20px;color:#000;letter-spacing:-0.230px;">208</div>
<div class="t" style="left:1107.42px;width:400px;text-align:center;top:439.80px;font-size:15px;line-height:20px;color:#000;font-weight:bold;letter-spacing:-0.166px;">Monitors</div>
<div class="a" style="left:1191px;top:475px;width:75px;height:29px;background:#fff;border:1px solid #d0d0d0;border-radius:2px;"></div>
<div class="t" style="left:1200px;top:479.50px;font-size:13px;line-height:20px;color:#000;letter-spacing:-0.143px;">prod1:</div>
<svg style="left:1243px;top:484px" width="12" height="10" viewBox="0 0 12 10"><path d="M0.8,5.2 L4.2,8.4 L11,1.6" fill="none" stroke="#21bf4b" stroke-width="2.4"/></svg>
<div class="a" style="left:1270px;top:475px;width:74px;height:29px;background:#fff;border:1px solid #d0d0d0;border-radius:2px;"></div>
<div class="t" style="left:1279px;top:479.50px;font-size:13px;line-height:20px;color:#000;letter-spacing:-0.143px;">prod2:</div>
<svg style="left:1321px;top:484px" width="12" height="10" viewBox="0 0 12 10"><path d="M0.8,5.2 L4.2,8.4 L11,1.6" fill="none" stroke="#21bf4b" stroke-width="2.4"/></svg>
<div class="a" style="left:1348px;top:475px;width:75px;height:29px;background:#fff;border:1px solid #d0d0d0;border-radius:2px;"></div>
<div class="t" style="left:1357px;top:479.50px;font-size:13px;line-height:20px;color:#000;letter-spacing:-0.143px;">prod3:</div>
<svg style="left:1400px;top:484px" width="12" height="10" viewBox="0 0 12 10"><path d="M0.8,5.2 L4.2,8.4 L11,1.6" fill="none" stroke="#21bf4b" stroke-width="2.4"/></svg>
<div class="t" style="left:1364.87px;width:400px;text-align:center;top:439.80px;font-size:15px;line-height:20px;color:#000;font-weight:bold;letter-spacing:-0.253px;">Managers</div>
<div class="a" style="left:1449px;top:475px;width:75px;height:29px;background:#fff;border:1px solid #d0d0d0;border-radius:2px;"></div>
<div class="t" style="left:1458px;top:479.50px;font-size:13px;line-height:20px;color:#000;letter-spacing:-0.143px;">prod1:</div>
<svg style="left:1501px;top:484px" width="12" height="10" viewBox="0 0 12 10"><path d="M0.8,5.2 L4.2,8.4 L11,1.6" fill="none" stroke="#21bf4b" stroke-width="2.4"/></svg>
<div class="a" style="left:1528px;top:475px;width:74px;height:29px;background:#fff;border:1px solid #d0d0d0;border-radius:2px;"></div>
<div class="t" style="left:1537px;top:479.50px;font-size:13px;line-height:20px;color:#000;letter-spacing:-0.143px;">prod2:</div>
<svg style="left:1579px;top:484px" width="12" height="10" viewBox="0 0 12 10"><path d="M0.8,5.2 L4.2,8.4 L11,1.6" fill="none" stroke="#21bf4b" stroke-width="2.4"/></svg>
<div class="a" style="left:1606px;top:475px;width:75px;height:29px;background:#fff;border:1px solid #d0d0d0;border-radius:2px;"></div>
<div class="t" style="left:1615px;top:479.50px;font-size:13px;line-height:20px;color:#000;letter-spacing:-0.143px;">prod3:</div>
<svg style="left:1658px;top:484px" width="12" height="10" viewBox="0 0 12 10"><path d="M0.8,5.2 L4.2,8.4 L11,1.6" fill="none" stroke="#21bf4b" stroke-width="2.4"/></svg>
<div class="t" style="left:1622.91px;width:400px;text-align:center;top:439.80px;font-size:15px;line-height:20px;color:#000;font-weight:bold;letter-spacing:-0.181px;">Meta Data Servers</div>
<div class="a" style="left:1706px;top:475px;width:75px;height:29px;background:#fff;border:1px solid #d0d0d0;border-radius:2px;"></div>
<div class="t" style="left:1715px;top:479.50px;font-size:13px;line-height:20px;color:#000;letter-spacing:-0.143px;">prod1:</div>
<svg style="left:1758px;top:484px" width="12" height="10" viewBox="0 0 12 10"><path d="M0.8,5.2 L4.2,8.4 L11,1.6" fill="none" stroke="#21bf4b" stroke-width="2.4"/></svg>
<div class="a" style="left:1785px;top:475px;width:75px;height:29px;background:#fff;border:1px solid #d0d0d0;border-radius:2px;"></div>
<div class="t" style="left:1794px;top:479.50px;font-size:13px;line-height:20px;color:#000;letter-spacing:-0.143px;">prod2:</div>
<svg style="left:1837px;top:484px" width="12" height="10" viewBox="0 0 12 10"><path d="M0.8,5.2 L4.2,8.4 L11,1.6" fill="none" stroke="#21bf4b" stroke-width="2.4"/></svg>
<div class="a" style="left:1864px;top:475px;width:75px;height:29px;background:#fff;border:1px solid #d0d0d0;border-radius:2px;"></div>
<div class="t" style="left:1873px;top:479.50px;font-size:13px;line-height:20px;color:#000;letter-spacing:-0.143px;">prod3:</div>
<svg style="left:1916px;top:484px" width="12" height="10" viewBox="0 0 12 10"><path d="M0.8,5.2 L4.2,8.4 L11,1.6" fill="none" stroke="#21bf4b" stroke-width="2.4"/></svg>
<div class="t" style="left:443.90px;width:400px;text-align:center;top:752.80px;font-size:15px;line-height:20px;color:#000;font-weight:bold;letter-spacing:-0.204px;">Usage</div>
<svg style="left:544px;top:796px" width="200" height="100" viewBox="0 0 200 100"><path d="M5,100 A95,95 0 0 1 195,100" fill="none" stroke="#f3f3f3" stroke-width="10"/><path d="M5,100 A95,95 0 0 1 5.45,90.8" fill="none" stroke="#c2ddf2" stroke-width="10"/></svg>
<div class="t" style="left:448.16px;width:400px;text-align:center;top:857.61px;font-size:30px;line-height:20px;color:#000;letter-spacing:0.320px;">3%</div>
<div class="t" style="left:444.04px;width:400px;text-align:center;top:904.50px;font-size:13px;line-height:20px;color:#000;letter-spacing:0.081px;">64.01 GiB of 2.24 TiB</div>
<div class="t" style="left:905px;top:671.80px;font-size:15px;line-height:20px;color:#000;font-weight:bold;letter-spacing:-0.170px;">Reads:</div>
<div class="t" style="left:905px;top:771.80px;font-size:15px;line-height:20px;color:#000;font-weight:bold;letter-spacing:-0.120px;">Writes:</div>
<div class="t" style="left:905px;top:862.80px;font-size:15px;line-height:20px;color:#000;font-weight:bold;letter-spacing:0.032px;">IOPS:</div>
<div class="t" style="left:905px;top:879.80px;font-size:15px;line-height:20px;color:#000;font-weight:bold;letter-spacing:-0.170px;">Reads:</div>
<div class="t" style="left:905px;top:962.80px;font-size:15px;line-height:20px;color:#000;font-weight:bold;letter-spacing:0.032px;">IOPS:</div>
<div class="t" style="left:905px;top:979.80px;font-size:15px;line-height:20px;color:#000;font-weight:bold;letter-spacing:-0.120px;">Writes:</div>
<svg style="left:0;top:0" width="1972" height="1391" viewBox="0 0 1972 1391"><path d="M995,720.5 L1941,720.5" stroke="#c8c8c8" stroke-width="1"/><path d="M1845.7,720.5 L1845.7,720.5 L1872.2,718 L1899.4,667 L1923.3,720.5 L1923.3,720.5 Z" fill="#e0e0e0" stroke="#c4c4c4" stroke-width="1.2" stroke-linejoin="round"/></svg>
<div class="t" style="right:36.07px;top:670.15px;font-size:14px;line-height:20px;color:#000;letter-spacing:0.075px;">170 B/s</div>
<svg style="left:0;top:0" width="1972" height="1391" viewBox="0 0 1972 1391"><path d="M995,820.5 L1941,820.5" stroke="#c8c8c8" stroke-width="1"/><path d="M1489.7,820.5 L1489.7,820.5 L1516.5,795.3 L1544.5,790.1 L1573.2,789.2 L1600.5,770.2 L1624.8,818.9 L1645.5,820.5 L1787.9,820.5 L1817.1,788.7 L1843.4,763.1 L1875.6,785 L1899.2,816.4 L1923,820.5 L1923,820.5 Z" fill="#e0e0e0" stroke="#c4c4c4" stroke-width="1.2" stroke-linejoin="round"/></svg>
<div class="t" style="right:36.02px;top:770.15px;font-size:14px;line-height:20px;color:#000;letter-spacing:0.019px;">4.00 KiB/s</div>
<svg style="left:0;top:0" width="1972" height="1391" viewBox="0 0 1972 1391"><path d="M995,920.5 L1941,920.5" stroke="#c8c8c8" stroke-width="1"/><path d="M1872.2,920.5 L1872.2,920.5 L1899.4,856.2 L1923.3,920.5 L1923.3,920.5 Z" fill="#e0e0e0" stroke="#c4c4c4" stroke-width="1.2" stroke-linejoin="round"/></svg>
<div class="t" style="right:36.21px;top:870.15px;font-size:14px;line-height:20px;color:#000;letter-spacing:0.214px;">0</div>
<svg style="left:0;top:0" width="1972" height="1391" viewBox="0 0 1972 1391"><path d="M995,1020.5 L1941,1020.5" stroke="#c8c8c8" stroke-width="1"/><path d="M1096,1020.5 L1096,1020.5 L1115.5,1017.6 L1131.3,1017.6 L1149.6,1020.5 L1317.5,1020.5 L1345.5,1018 L1373.5,1020.5 L1433,1020.5 L1460,1018 L1489.9,1020.5 L1517,990.9 L1543.7,959.7 L1573.3,962.2 L1600.7,946 L1624.8,999 L1645.9,1020.5 L1674.2,1018 L1702.1,1020.5 L1788.3,1020.5 L1816.2,984.5 L1843.4,951.6 L1872.8,973.1 L1899.4,1010.4 L1922.7,1020.5 L1922.7,1020.5 Z" fill="#e0e0e0" stroke="#c4c4c4" stroke-width="1.2" stroke-linejoin="round"/></svg>
<div class="t" style="right:36.21px;top:970.15px;font-size:14px;line-height:20px;color:#000;letter-spacing:0.214px;">0</div>
<div class="a" style="left:963px;top:1181px;width:46px;height:5px;background:#dcdcdc;"></div>
<svg style="left:982px;top:1182px" width="9" height="4" viewBox="0 0 9 4"><path d="M0.3,0.6 L4.5,3.6 L8.7,0.6" fill="none" stroke="#8a8a8a" stroke-width="0.8"/></svg>
<div class="a" style="left:5px;top:1186px;width:1962px;height:36px;background:#f5f5f5;"></div>
<div class="a" style="left:5px;top:1222px;width:1962px;height:1px;background:#d0d0d0;"></div>
<div class="a" style="left:16px;top:1192px;width:53px;height:24px;background:#3892d4;border-radius:3px;"></div>
<div class="t" style="left:-157.67px;width:400px;text-align:center;top:1194.50px;font-size:13px;line-height:20px;color:#fff;letter-spacing:-0.334px;">Tasks</div>
<div class="t" style="left:88px;top:1194.50px;font-size:13px;line-height:20px;color:#000;letter-spacing:-0.103px;">Cluster log</div>
<div class="a" style="left:6px;top:1223px;width:1960px;height:29px;background:#fff;"></div>
<div class="a" style="left:6px;top:1223px;width:149px;height:29px;background:#eef4fb;"></div>
<div class="a" style="left:6px;top:1252px;width:1948px;height:1px;background:#d0d0d0;"></div>
<div class="a" style="left:1954px;top:1252px;width:12px;height:1px;background:#d0d0d0;"></div>
<div class="a" style="left:155px;top:1223px;width:1px;height:29px;background:#d0d0d0;"></div>
<div class="a" style="left:305px;top:1223px;width:1px;height:29px;background:#d0d0d0;"></div>
<div class="a" style="left:405px;top:1223px;width:1px;height:29px;background:#d0d0d0;"></div>
<div class="a" style="left:555px;top:1223px;width:1px;height:29px;background:#d0d0d0;"></div>
<div class="a" style="left:1753px;top:1223px;width:1px;height:29px;background:#d0d0d0;"></div>
<div class="a" style="left:1953px;top:1223px;width:1px;height:29px;background:#d0d0d0;"></div>
<div class="t" style="left:16px;top:1227.50px;font-size:13px;line-height:20px;color:#666;letter-spacing:0.105px;">Start Time</div>
<div class="t" style="left:166px;top:1227.50px;font-size:13px;line-height:20px;color:#666;letter-spacing:0.046px;">End Time</div>
<div class="t" style="left:316px;top:1227.50px;font-size:13px;line-height:20px;color:#666;letter-spacing:-0.270px;">Node</div>
<div class="t" style="left:416px;top:1227.50px;font-size:13px;line-height:20px;color:#666;letter-spacing:-0.175px;">User name</div>
<div class="t" style="left:566px;top:1227.50px;font-size:13px;line-height:20px;color:#666;letter-spacing:-0.184px;">Description</div>
<div class="t" style="left:1764px;top:1227.50px;font-size:13px;line-height:20px;color:#666;letter-spacing:0.024px;">Status</div>
<svg style="left:81px;top:1231px" width="10" height="14" viewBox="0 0 10 14"><path d="M4.9,0.3 L4.9,13.2 M0.6,8.8 L4.9,13.2 L9.2,8.8" fill="none" stroke="#8a8a8a" stroke-width="1"/></svg>
<div class="a" style="left:6px;top:1253px;width:1948px;height:25px;background:#fff;"></div>
<div class="a" style="left:6px;top:1278px;width:1948px;height:25px;background:#fafafa;"></div>
<div class="a" style="left:6px;top:1303px;width:1948px;height:25px;background:#fff;"></div>
<div class="a" style="left:6px;top:1328px;width:1948px;height:25px;background:#fafafa;"></div>
<div class="a" style="left:6px;top:1353px;width:1948px;height:25px;background:#fff;"></div>
<div class="a" style="left:6px;top:1378px;width:1948px;height:7px;background:#fafafa;"></div>
<div class="a" style="left:6px;top:1278px;width:1948px;height:1px;background:#d8d8d8;"></div>
<div class="a" style="left:6px;top:1303px;width:1948px;height:1px;background:#d8d8d8;"></div>
<div class="a" style="left:6px;top:1328px;width:1948px;height:1px;background:#d8d8d8;"></div>
<div class="a" style="left:6px;top:1353px;width:1948px;height:1px;background:#d8d8d8;"></div>
<div class="a" style="left:6px;top:1378px;width:1948px;height:1px;background:#d8d8d8;"></div>
<div class="t" style="left:16px;top:1256.50px;font-size:13px;line-height:20px;color:#000;letter-spacing:-0.060px;">Jul 15 20:36:45</div>
<div class="t" style="left:166px;top:1256.50px;font-size:13px;line-height:20px;color:#000;letter-spacing:-0.060px;">Jul 15 20:36:45</div>
<div class="t" style="left:316px;top:1256.50px;font-size:13px;line-height:20px;color:#000;letter-spacing:-0.250px;">prod1</div>
<div class="t" style="left:416px;top:1256.50px;font-size:13px;line-height:20px;color:#000;letter-spacing:-0.174px;">admin@pve</div>
<div class="t" style="left:566px;top:1256.50px;font-size:13px;line-height:20px;color:#000;letter-spacing:-0.089px;">VM 99999 - Destroy</div>
<div class="t" style="left:1764px;top:1256.50px;font-size:13px;line-height:20px;color:#000;letter-spacing:0.109px;">OK</div>
<div class="t" style="left:16px;top:1281.50px;font-size:13px;line-height:20px;color:#000;letter-spacing:-0.060px;">Jul 15 20:36:39</div>
<div class="t" style="left:166px;top:1281.50px;font-size:13px;line-height:20px;color:#000;letter-spacing:-0.060px;">Jul 15 20:36:39</div>
<div class="t" style="left:316px;top:1281.50px;font-size:13px;line-height:20px;color:#000;letter-spacing:-0.250px;">prod1</div>
<div class="t" style="left:416px;top:1281.50px;font-size:13px;line-height:20px;color:#000;letter-spacing:-0.174px;">admin@pve</div>
<div class="t" style="left:566px;top:1281.50px;font-size:13px;line-height:20px;color:#000;letter-spacing:-0.049px;">VM 99999 - Create</div>
<div class="t" style="left:1764px;top:1281.50px;font-size:13px;line-height:20px;color:#000;letter-spacing:0.109px;">OK</div>
<div class="t" style="left:16px;top:1306.50px;font-size:13px;line-height:20px;color:#000;letter-spacing:-0.060px;">Jul 15 20:35:56</div>
<div class="t" style="left:166px;top:1306.50px;font-size:13px;line-height:20px;color:#000;letter-spacing:-0.060px;">Jul 15 20:35:57</div>
<div class="t" style="left:316px;top:1306.50px;font-size:13px;line-height:20px;color:#000;letter-spacing:-0.250px;">prod1</div>
<div class="t" style="left:416px;top:1306.50px;font-size:13px;line-height:20px;color:#000;letter-spacing:-0.174px;">admin@pve</div>
<div class="t" style="left:566px;top:1306.50px;font-size:13px;line-height:20px;color:#000;letter-spacing:-0.081px;">VM 9000 - Destroy</div>
<div class="t" style="left:1764px;top:1306.50px;font-size:13px;line-height:20px;color:#000;letter-spacing:0.109px;">OK</div>
<div class="t" style="left:16px;top:1331.50px;font-size:13px;line-height:20px;color:#000;letter-spacing:-0.060px;">Jul 15 20:35:53</div>
<div class="t" style="left:166px;top:1331.50px;font-size:13px;line-height:20px;color:#000;letter-spacing:-0.060px;">Jul 15 20:35:53</div>
<div class="t" style="left:316px;top:1331.50px;font-size:13px;line-height:20px;color:#000;letter-spacing:-0.250px;">prod1</div>
<div class="t" style="left:416px;top:1331.50px;font-size:13px;line-height:20px;color:#000;letter-spacing:-0.174px;">admin@pve</div>
<div class="t" style="left:566px;top:1331.50px;font-size:13px;line-height:20px;color:#000;letter-spacing:-0.038px;">VM 9000 - Create</div>
<div class="t" style="left:1764px;top:1331.50px;font-size:13px;line-height:20px;color:#000;letter-spacing:0.109px;">OK</div>
<div class="t" style="left:16px;top:1356.50px;font-size:13px;line-height:20px;color:#000;letter-spacing:-0.060px;">Jul 15 20:19:51</div>
<div class="t" style="left:166px;top:1356.50px;font-size:13px;line-height:20px;color:#000;letter-spacing:-0.060px;">Jul 15 20:19:51</div>
<div class="t" style="left:316px;top:1356.50px;font-size:13px;line-height:20px;color:#000;letter-spacing:-0.250px;">prod1</div>
<div class="t" style="left:416px;top:1356.50px;font-size:13px;line-height:20px;color:#000;letter-spacing:-0.174px;">admin@pve</div>
<div class="t" style="left:566px;top:1356.50px;font-size:13px;line-height:20px;color:#000;letter-spacing:-0.089px;">VM 99999 - Destroy</div>
<div class="t" style="left:1764px;top:1356.50px;font-size:13px;line-height:20px;color:#000;letter-spacing:0.109px;">OK</div>
<div class="a" style="left:1957px;top:1256px;width:6px;height:40px;background:#7f8486;border-radius:3px;"></div>
</body></html>
